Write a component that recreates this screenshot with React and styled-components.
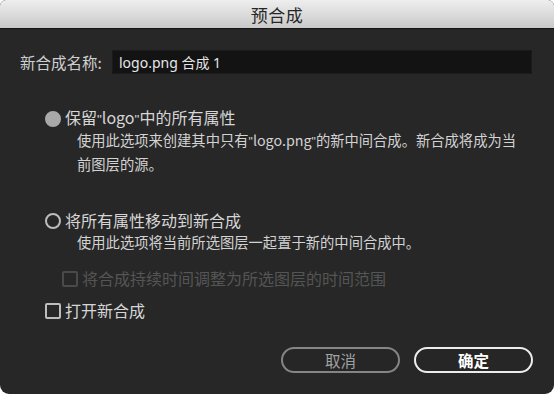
import styled, {createGlobalStyle} from 'styled-components'

const GlobalStyle = createGlobalStyle`
  html, body {
    margin: 0;
    padding: 0;
    background: #ffffff;
  }
  body {
    font-family: "Noto Sans CJK SC", "Noto Sans", sans-serif;
  }
`

const App = () => {
  return (
    <>
      <GlobalStyle />
      <Window>
        <TitleBar>预合成</TitleBar>
        <Content>
          <NameRow>
            <Label>新合成名称:</Label>
            <NameInput defaultValue="logo.png 合成 1" />
          </NameRow>

          <Option first>
            <OptionRow>
              <Radio checked />
              <OptionText>保留<Quote>"</Quote>logo<Quote>"</Quote>中的所有属性</OptionText>
            </OptionRow>
            <Description>
              使用此选项来创建其中只有<Quote>"</Quote>logo.png<Quote>"</Quote>的新中间合成。新合成将成为当
              <br />
              前图层的源。
            </Description>
          </Option>

          <Option>
            <OptionRow>
              <Radio />
              <OptionText>将所有属性移动到新合成</OptionText>
            </OptionRow>
            <Description>使用此选项将当前所选图层一起置于新的中间合成中。</Description>
          </Option>

          <CheckRow indent>
            <Check disabled />
            <OptionText disabled>将合成持续时间调整为所选图层的时间范围</OptionText>
          </CheckRow>

          <CheckRow>
            <Check />
            <OptionText>打开新合成</OptionText>
          </CheckRow>
        </Content>

        <Footer>
          <Button>取消</Button>
          <Button primary>确定</Button>
        </Footer>
      </Window>
    </>
  )
}

export default App

const Window = styled.div`
  width: 554px;
  height: 394px;
  background: #272727;
  border-radius: 6px 6px 9px 9px;
  overflow: hidden;
  display: flex;
  flex-direction: column;
  box-sizing: border-box;
`

const TitleBar = styled.div`
  height: 28px;
  flex-shrink: 0;
  background: linear-gradient(#eeeeee, #c9c9c9);
  border-bottom: 1px solid #161616;
  display: flex;
  align-items: center;
  justify-content: center;
  font-size: 17px;
  color: #262626;
  letter-spacing: 0.5px;
`

const Content = styled.div`
  padding: 0 22px 0 20px;
  display: flex;
  flex-direction: column;
`

const NameRow = styled.div`
  margin-top: 21px;
  display: flex;
  align-items: center;
  height: 24px;
`

const Label = styled.div`
  width: 92px;
  font-size: 15.5px;
  color: #cfcfcf;
  line-height: 24px;
`

const NameInput = styled.input`
  flex: 1;
  height: 24px;
  box-sizing: border-box;
  background: #131313;
  border: 1px solid #1b1b1b;
  color: #e6e6e6;
  font-family: "Noto Sans", "Noto Sans CJK SC", sans-serif;
  font-size: 14px;
  padding: 0 6px;
  outline: none;
`

const Option = styled.div`
  margin-top: ${p => (p.first ? '34px' : '36px')};
  margin-left: 25px;
  display: flex;
  flex-direction: column;
`

const OptionRow = styled.div`
  display: flex;
  align-items: center;
  height: 21px;
  gap: 4px;
`

const Radio = styled.span`
  width: 16px;
  height: 16px;
  box-sizing: border-box;
  border-radius: 50%;
  flex-shrink: 0;
  border: 2px solid ${p => (p.checked ? '#a9a9a9' : '#bdbdbd')};
  background: ${p => (p.checked ? '#a9a9a9' : 'transparent')};
`

const OptionText = styled.span`
  font-size: 16px;
  color: ${p => (p.disabled ? '#555555' : '#d6d6d6')};
  line-height: 21px;
  white-space: nowrap;
`

const Quote = styled.span`
  font-family: "Liberation Sans", sans-serif;
  font-size: 0.85em;
`

const Description = styled.div`
  margin-left: 32px;
  font-size: 14.3px;
  line-height: 21px;
  color: #d2d2d2;
  white-space: nowrap;
`

const CheckRow = styled.div`
  margin-top: ${p => (p.indent ? '16px' : '11px')};
  margin-left: ${p => (p.indent ? '42px' : '25px')};
  display: flex;
  align-items: center;
  height: 21px;
  gap: 4px;
`

const Check = styled.span`
  width: 16px;
  height: 16px;
  box-sizing: border-box;
  border-radius: 2px;
  flex-shrink: 0;
  border: 2px solid ${p => (p.disabled ? '#4a4a4a' : '#bdbdbd')};
`

const Footer = styled.div`
  margin-top: auto;
  padding: 0 21px 21px 0;
  display: flex;
  justify-content: flex-end;
  gap: 14px;
`

const Button = styled.button`
  width: 119px;
  height: 26px;
  box-sizing: border-box;
  border-radius: 13px;
  background: #262626;
  border: 2px solid ${p => (p.primary ? '#ececec' : '#858585')};
  color: ${p => (p.primary ? '#ffffff' : '#a2a2a2')};
  font-family: "Noto Sans CJK SC", sans-serif;
  font-size: 15.5px;
  font-weight: ${p => (p.primary ? 700 : 400)};
  display: flex;
  align-items: center;
  justify-content: center;
  padding: 0;
  cursor: pointer;
`
